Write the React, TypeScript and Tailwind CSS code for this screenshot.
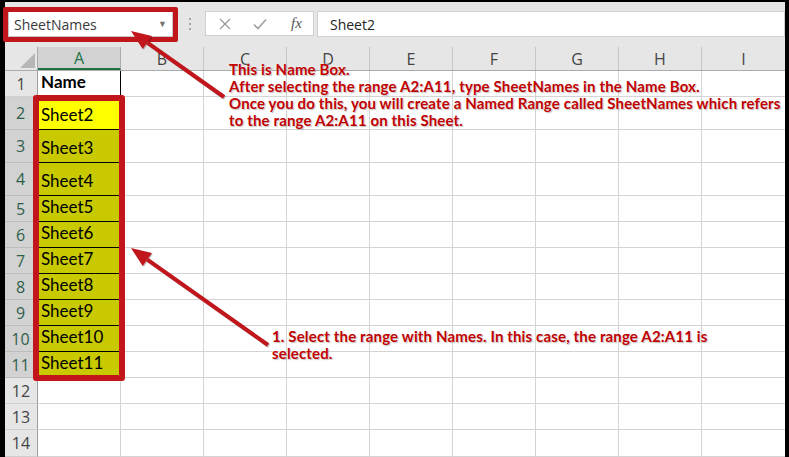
import React from 'react'

const cols = ['A', 'B', 'C', 'D', 'E', 'F', 'G', 'H', 'I']

// height of each sheet row, rows 1..14
const rows = [
  { n: 1, h: 'h-[26px]', text: 'Name' },
  { n: 2, h: 'h-[33px]', text: 'Sheet2' },
  { n: 3, h: 'h-[33px]', text: 'Sheet3' },
  { n: 4, h: 'h-[33px]', text: 'Sheet4' },
  { n: 5, h: 'h-[26px]', text: 'Sheet5' },
  { n: 6, h: 'h-[26px]', text: 'Sheet6' },
  { n: 7, h: 'h-[26px]', text: 'Sheet7' },
  { n: 8, h: 'h-[26px]', text: 'Sheet8' },
  { n: 9, h: 'h-[26px]', text: 'Sheet9' },
  { n: 10, h: 'h-[26px]', text: 'Sheet10' },
  { n: 11, h: 'h-[26px]', text: 'Sheet11' },
  { n: 12, h: 'h-[26px]', text: '' },
  { n: 13, h: 'h-[26px]', text: '' },
  { n: 14, h: 'h-[27px]', text: '' },
]

const ui = { fontFamily: '"Open Sans", "Noto Sans", sans-serif' }
const cellFont = { fontFamily: 'Lato, "Liberation Sans", sans-serif' }

function Arrow({ x1, y1, x2, y2 }: { x1: number; y1: number; x2: number; y2: number }) {
  const dx = x2 - x1
  const dy = y2 - y1
  const len = Math.hypot(dx, dy)
  const ux = dx / len
  const uy = dy / len
  const bx = x2 - ux * 20
  const by = y2 - uy * 20
  const px = -uy
  const py = ux
  const pts = `${x2},${y2} ${bx + px * 8},${by + py * 8} ${bx - px * 8},${by - py * 8}`
  return (
    <g>
      <line x1={x1 + 1} y1={y1 + 1} x2={bx + 1} y2={by + 1} stroke="rgba(0,0,0,0.25)" strokeWidth={4} />
      <polygon points={pts} fill="rgba(0,0,0,0.25)" transform="translate(1 1)" />
      <line x1={x1} y1={y1} x2={bx} y2={by} stroke="#c1161c" strokeWidth={4} />
      <polygon points={pts} fill="#c1161c" />
    </g>
  )
}

export default function App() {
  return (
    <div className="relative w-[789px] h-[457px] overflow-hidden bg-black pl-[5px] pr-[4px] pt-[2px]">
      <div className="flex h-full flex-col bg-[#e6e6e6]">
        {/* formula bar */}
        <div className="flex h-[45px] items-start pt-[9px]" style={ui}>
          <div className="ml-[3px] flex h-[26px] w-[165px] items-center justify-between border border-[#c6c6c6] bg-white pl-[5px] pr-[5px] text-[14px] text-[#3a3a3a]">
            <span>SheetNames</span>
            <span className="text-[9px] text-[#777]">▼</span>
          </div>
          <div className="ml-[16px] mt-[7px] flex flex-col gap-[3px]">
            <div className="h-[2px] w-[2px] bg-[#a6a6a6]" />
            <div className="h-[2px] w-[2px] bg-[#a6a6a6]" />
            <div className="h-[2px] w-[2px] bg-[#a6a6a6]" />
          </div>
          <div className="ml-[14px] flex h-[25px] w-[109px] items-center border border-[#d0d0d0] bg-white">
            <svg width="12" height="12" viewBox="0 0 12 12" className="ml-[13px]">
              <path d="M1 1 L11 11 M11 1 L1 11" stroke="#9a9a9a" strokeWidth="1.3" />
            </svg>
            <svg width="14" height="12" viewBox="0 0 14 12" className="ml-[22px]">
              <path d="M1 6.5 L5 10.5 L13 1.5" stroke="#a0a0a0" strokeWidth="1.6" fill="none" />
            </svg>
            <span className="ml-[24px] text-[15px] italic text-[#555]" style={{ fontFamily: '"Liberation Serif", serif' }}>
              fx
            </span>
          </div>
          <div className="ml-[3px] flex h-[26px] flex-1 items-center border border-[#d0d0d0] bg-white pl-[12px] text-[14px] text-[#222]">
            Sheet2
          </div>
        </div>

        {/* column headers */}
        <div className="flex h-[24px] border-b border-[#ababab]" style={ui}>
          <div className="relative w-[33px] shrink-0 border-r border-[#ababab]">
            <svg width="33" height="24" viewBox="0 0 33 24" className="absolute inset-0">
              <polygon points="30,6 30,21 15,21" fill="#b7b7b7" />
            </svg>
          </div>
          {cols.map((c) => (
            <div
              key={c}
              className={
                c === 'A'
                  ? 'flex w-[83px] shrink-0 items-center justify-center border-r border-[#ababab] border-b-2 border-b-[#217346] bg-[#d2d2d2] text-[16px] text-[#217346]'
                  : c === 'I'
                  ? 'flex flex-1 items-center justify-center text-[16px] text-[#444]'
                  : 'flex w-[83px] shrink-0 items-center justify-center border-r border-[#c6c6c6] text-[16px] text-[#444]'
              }
            >
              {c}
            </div>
          ))}
        </div>

        {/* sheet rows */}
        {rows.map((r) => {
          const sel = r.n >= 2 && r.n <= 11
          return (
            <div key={r.n} className={`flex ${r.h} shrink-0`}>
              <div
                className={
                  sel
                    ? 'flex w-[33px] shrink-0 items-center justify-center border-b border-[#bdbdbd] border-r-2 border-r-[#217346] bg-[#d2d2d2] text-[16px] text-[#2f5f4a]'
                    : 'flex w-[33px] shrink-0 items-center justify-center border-b border-[#cfcfcf] border-r border-r-[#9b9b9b] bg-[#e6e6e6] text-[16px] text-[#444]'
                }
                style={ui}
              >
                {r.n}
              </div>
              <div
                className={
                  r.n === 1
                    ? 'flex w-[83px] shrink-0 items-end border-r border-b border-black bg-white pb-[2px] pl-[3px] text-[17px] font-bold text-black'
                    : r.n === 2
                    ? 'flex w-[83px] shrink-0 items-end border-r border-b border-black bg-[#ffff00] pb-[2px] pl-[3px] text-[17px] text-black'
                    : sel
                    ? 'flex w-[83px] shrink-0 items-end border-r border-b border-black bg-[#c9c900] pb-[2px] pl-[3px] text-[17px] text-black'
                    : 'w-[83px] shrink-0 border-r border-b border-[#d4d4d4] bg-white'
                }
                style={cellFont}
              >
                {r.text}
              </div>
              {cols.slice(1).map((c) => (
                <div
                  key={c}
                  className={
                    c === 'I'
                      ? 'flex-1 border-b border-[#d4d4d4] bg-white'
                      : 'w-[83px] shrink-0 border-r border-b border-[#d4d4d4] bg-white'
                  }
                />
              ))}
            </div>
          )
        })}
      </div>

      {/* annotation frames */}
      <div className="absolute left-[3px] top-[7px] h-[35px] w-[175px] rounded-[2px] border-[5px] border-[#c1161c]" />
      <div className="absolute left-[33px] top-[95px] h-[286px] w-[92px] rounded-[3px] border-[6px] border-[#c1161c]" />

      <svg className="pointer-events-none absolute inset-0" width="789" height="457" viewBox="0 0 789 457">
        <Arrow x1={224} y1={97} x2={131} y2={31} />
        <Arrow x1={268} y1={345} x2={131} y2={248} />
      </svg>

      {/* annotation texts */}
      <div
        className="absolute left-[229px] top-[61px] whitespace-nowrap text-[15px] font-bold leading-[17px] tracking-[0.15px] text-[#c00000] [text-shadow:0_0_2px_#fff,1px_1px_1px_rgba(0,0,0,0.3)]"
        style={cellFont}
      >
        <div>This is Name Box.</div>
        <div>After selecting the range A2:A11, type SheetNames in the Name Box.</div>
        <div>Once you do this, you will create a Named Range called SheetNames which refers</div>
        <div>to the range A2:A11 on this Sheet.</div>
      </div>
      <div
        className="absolute left-[272px] top-[328px] whitespace-nowrap text-[15px] font-bold leading-[17px] tracking-[0.15px] text-[#c00000] [text-shadow:0_0_2px_#fff,1px_1px_1px_rgba(0,0,0,0.3)]"
        style={cellFont}
      >
        <div>1. Select the range with Names. In this case, the range A2:A11 is</div>
        <div>selected.</div>
      </div>
    </div>
  )
}
